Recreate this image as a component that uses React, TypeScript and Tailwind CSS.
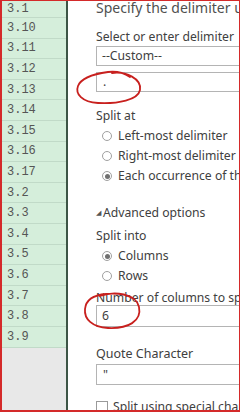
const rows = ["3.10", "3.11", "3.12", "3.13", "3.14", "3.15", "3.16", "3.17", "3.2", "3.3", "3.4", "3.5", "3.6", "3.7", "3.8", "3.9"];

const Radio = ({ label, checked }: { label: string; checked?: boolean }) => (
  <div className="flex items-center h-[20px] pl-[6px]">
    <span className="w-[10px] h-[10px] shrink-0 rounded-full border border-[#a0a0a0] bg-white flex items-center justify-center">
      {checked && <span className="w-[5px] h-[5px] rounded-full bg-[#707070]" />}
    </span>
    <span className="ml-[6px]">{label}</span>
  </div>
);

export default function App() {
  return (
    <div className="relative w-[240px] h-[412px] overflow-hidden bg-white border-t border-l-2 border-r border-b-2 border-[#d42a2a] flex" style={{ fontFamily: '"Noto Sans", "Open Sans", sans-serif' }}>
      <div className="w-[66px] shrink-0 flex flex-col bg-[#e8e8e8] border-r-2 border-[#3d5546]" style={{ fontFamily: '"Liberation Mono", monospace' }}>
        <div className="h-[17px] shrink-0 bg-[#d5eedb] border-b border-[#c1dac8] flex items-end pl-[5px] text-[12px] leading-[16px] text-[#555]">3.1</div>
        {rows.map((r) => (
          <div key={r} className="h-[20.6px] shrink-0 bg-[#d5eedb] border-b border-[#c1dac8] flex items-center pl-[5px] text-[12px] text-[#555]">
            {r}
          </div>
        ))}
      </div>

      <div className="flex-1 overflow-hidden whitespace-nowrap pl-[28px] text-[12.2px] text-[#404040] flex flex-col">
        <div className="mt-[-2px] h-[18px] text-[14px] leading-[18px] text-[#505050]">Specify the delimiter used</div>
        <div className="mt-[12px] h-[16px] leading-[16px]">Select or enter delimiter</div>
        <div className="mt-[1px] h-[20px] w-[200px] shrink-0 border border-[#b4b4b4] leading-[18px] pl-[5px]">--Custom--</div>
        <div className="mt-[6px] h-[20px] w-[200px] shrink-0 border border-[#b4b4b4] leading-[18px] pl-[6px]">.</div>
        <div className="mt-[16px] h-[16px] leading-[16px]">Split at</div>
        <div className="mt-[2px]">
          <Radio label="Left-most delimiter" />
          <Radio label="Right-most delimiter" />
          <Radio label="Each occurrence of the delimiter" checked />
        </div>
        <div className="mt-[19px] h-[16px] leading-[16px] flex items-center">
          <span className="text-[7px] text-[#555] mr-[2px]">◢</span>
          <span>Advanced options</span>
        </div>
        <div className="mt-[7px] h-[16px] leading-[16px]">Split into</div>
        <div className="mt-[2px]">
          <Radio label="Columns" checked />
          <Radio label="Rows" />
        </div>
        <div className="mt-[4px] h-[16px] leading-[16px]">Number of columns to split into</div>
        <div className="mt-[-1px] h-[22px] w-[200px] shrink-0 border border-[#b4b4b4] leading-[20px] pl-[5px]">6</div>
        <div className="mt-[19px] h-[16px] leading-[16px] text-[12.5px]">Quote Character</div>
        <div className="mt-[2px] h-[21px] w-[200px] shrink-0 border border-[#b4b4b4] leading-[19px] pl-[6px]">"</div>
        <div className="mt-[15px] h-[14px] flex items-center">
          <span className="w-[12px] h-[12px] shrink-0 border border-[#9a9a9a] bg-white" />
          <span className="ml-[5px] text-[12.2px]">Split using special characters</span>
        </div>
      </div>

      <svg className="absolute left-0 top-0 pointer-events-none" width="240" height="412" viewBox="0 0 240 412" fill="none">
        <path d="M110 72 C124 70 140 78 138 89 C136 99 116 103 96 102 C80 101 73 93 76 85 C79 77 92 73 106 71 C114 70 122 72 128 76" stroke="#c8201e" strokeWidth="1.8" strokeLinecap="round" />
        <path d="M98 295 C112 290 134 292 137 306 C140 320 126 328 106 327 C90 326 82 318 83 308 C84 298 92 294 104 293 C116 292 126 294 132 298" stroke="#c8201e" strokeWidth="1.8" strokeLinecap="round" />
      </svg>
    </div>
  );
}
